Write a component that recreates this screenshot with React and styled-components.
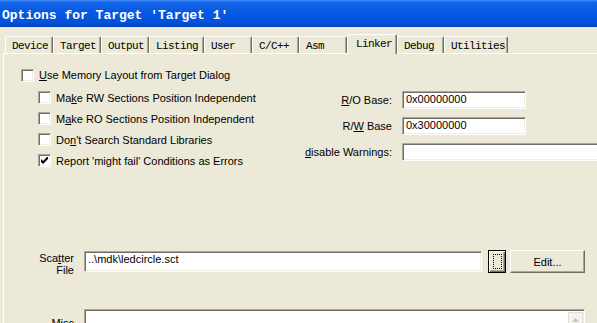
import styled, { createGlobalStyle } from 'styled-components';

const GlobalStyle = createGlobalStyle`
  html, body {
    margin: 0;
    padding: 0;
    background: #ece9d8;
  }
  body {
    font-family: "Liberation Sans", Arial, sans-serif;
    font-size: 11px;
    color: #000;
  }
`;

const Window = styled.div`
  width: 597px;
  height: 323px;
  overflow: hidden;
  background: #ece9d8;
  display: flex;
  flex-direction: column;
`;

const TitleBar = styled.div`
  flex: none;
  height: 27px;
  box-sizing: border-box;
  padding: 3px 0 0 2px;
  display: flex;
  align-items: center;
  background: linear-gradient(180deg, #3d87f5 0%, #1465e8 10%, #0658e2 45%, #0553dc 80%, #0444c2 100%);
  color: #fff;
  font: bold 13px "Liberation Mono", "DejaVu Sans Mono", monospace;
  white-space: pre;
`;

const TabStrip = styled.div`
  flex: none;
  height: 26px;
  display: flex;
  align-items: flex-end;
  padding-left: 5px;
  position: relative;
  z-index: 1;
`;

const Tab = styled.div`
  flex: none;
  box-sizing: border-box;
  width: ${({ $w }) => $w}px;
  height: ${({ $active }) => ($active ? 20 : 17)}px;
  margin-bottom: ${({ $active }) => ($active ? -1 : 0)}px;
  padding: ${({ $active }) => ($active ? '0 0 2px 8px' : '1px 0 0 6px')};
  display: flex;
  align-items: center;
  background: #ece9d8;
  border-top: 1px solid #fff;
  border-left: 1px solid #fff;
  border-right: 1px solid #716f64;
  border-top-left-radius: 2px;
  border-top-right-radius: 2px;
  box-shadow: inset -1px 0 #aca899;
  font: 11px "Liberation Mono", "DejaVu Sans Mono", monospace;
  letter-spacing: -0.6px;
  white-space: pre;
`;

const Panel = styled.div`
  flex: 1;
  min-width: 0;
  margin-left: 3px;
  border-top: 1px solid #fff;
  border-left: 1px solid #fff;
  display: flex;
  flex-direction: column;
`;

const TopSection = styled.div`
  display: flex;
`;

const OptionList = styled.div`
  flex: none;
  width: 296px;
  box-sizing: border-box;
  padding: 11px 0 0 17px;
  display: flex;
  flex-direction: column;
`;

const SubOptions = styled.div`
  margin-top: 2px;
  padding-left: 17px;
  display: flex;
  flex-direction: column;
`;

const OptionRow = styled.label`
  height: ${({ $h }) => $h || 20}px;
  display: flex;
  align-items: center;
  gap: 5px;
  white-space: nowrap;
`;

const CheckBox = styled.span`
  flex: none;
  position: relative;
  width: 13px;
  height: 13px;
  box-sizing: border-box;
  background: #fff;
  border: 1px solid;
  border-color: #aca899 #fff #fff #aca899;
  box-shadow: inset 1px 1px #716f64, inset -1px -1px #f1efe2;

  svg {
    position: absolute;
    left: 2px;
    top: 2px;
  }
`;

const FieldGrid = styled.div`
  flex: none;
  margin-top: 37px;
  display: grid;
  grid-template-columns: 92px auto;
  column-gap: 10px;
  row-gap: 8px;
  align-items: center;
  align-content: start;
`;

const FieldLabel = styled.span`
  justify-self: end;
  white-space: nowrap;
`;

const Field = styled.div`
  flex: none;
  box-sizing: border-box;
  width: ${({ $w }) => $w}px;
  height: ${({ $h }) => $h || 18}px;
  padding: 1px 3px 0;
  background: #fff;
  border: 1px solid;
  border-color: #aca899 #fff #fff #aca899;
  box-shadow: inset 1px 1px #716f64, inset -1px -1px #f1efe2;
  line-height: 13px;
  white-space: nowrap;
  position: relative;
`;

const FileRow = styled.div`
  margin-top: ${({ $top }) => $top}px;
  display: flex;
  align-items: flex-start;
`;

const RowLabel = styled.div`
  width: 70px;
  flex: none;
  padding-top: ${({ $pad }) => $pad}px;
  text-align: right;
  line-height: 12px;
`;

const Button = styled.div`
  flex: none;
  box-sizing: border-box;
  width: ${({ $w }) => $w}px;
  height: 23px;
  margin-left: ${({ $ml }) => $ml}px;
  display: flex;
  align-items: center;
  justify-content: center;
  background: #ece9d8;
  border: 1px solid;
  border-color: ${({ $focus }) => ($focus ? '#000' : '#fff #716f64 #716f64 #fff')};
  box-shadow: ${({ $focus }) =>
    $focus
      ? 'inset 1px 1px #fff, inset -1px -1px #716f64, inset -2px -2px #aca899'
      : 'inset -1px -1px #aca899'};
`;

const FocusRing = styled.span`
  width: 9px;
  height: 15px;
  box-sizing: border-box;
  border: 1px dotted #000;
`;

const ScrollUp = styled.div`
  position: absolute;
  right: 1px;
  top: 2px;
  width: 15px;
  height: 15px;
  box-sizing: border-box;
  background: #f4f3ee;
  border: 1px solid #e0dfd6;
  display: flex;
  align-items: center;
  justify-content: center;
`;

const tabs = [
  ['Device', 48],
  ['Target', 48],
  ['Output', 48],
  ['Listing', 55],
  ['User', 48],
  ['C/C++', 47],
  ['Asm', 48],
  ['Linker', 50],
  ['Debug', 47],
  ['Utilities', 64],
];

function Check({ checked }) {
  return (
    <CheckBox>
      {checked && (
        <svg width="7" height="7" viewBox="0 0 7 7">
          <polygon points="0,2 2,4 7,-1 7,2 2,7 0,5" fill="#000" />
        </svg>
      )}
    </CheckBox>
  );
}

export default function App() {
  return (
    <Window>
      <GlobalStyle />
      <TitleBar>Options for Target 'Target 1'</TitleBar>
      <TabStrip>
        {tabs.map(([name, w]) => (
          <Tab key={name} $w={w} $active={name === 'Linker'}>
            {name}
          </Tab>
        ))}
      </TabStrip>
      <Panel>
        <TopSection>
          <OptionList>
            <OptionRow>
              <Check />
              <span>
                <u>U</u>se Memory Layout from Target Dialog
              </span>
            </OptionRow>
            <SubOptions>
              <OptionRow $h={21}>
                <Check />
                <span>
                  Ma<u>k</u>e RW Sections Position Independent
                </span>
              </OptionRow>
              <OptionRow $h={21}>
                <Check />
                <span>
                  M<u>a</u>ke RO Sections Position Independent
                </span>
              </OptionRow>
              <OptionRow $h={21}>
                <Check />
                <span>
                  Do<u>n</u>'t Search Standard Libraries
                </span>
              </OptionRow>
              <OptionRow $h={21}>
                <Check checked />
                <span>Report 'might fail' Conditions as Errors</span>
              </OptionRow>
            </SubOptions>
          </OptionList>
          <FieldGrid>
            <FieldLabel>
              <u>R</u>/O Base:
            </FieldLabel>
            <Field $w={124}>0x00000000</Field>
            <FieldLabel>
              R/<u>W</u> Base
            </FieldLabel>
            <Field $w={124}>0x30000000</Field>
            <FieldLabel>
              <u>d</u>isable Warnings:
            </FieldLabel>
            <Field $w={220} />
          </FieldGrid>
        </TopSection>

        <FileRow $top={79}>
          <RowLabel $pad={2}>
            Sca<u>t</u>ter
            <br />
            File
          </RowLabel>
          <Field $w={398} $h={21} style={{ marginLeft: 10, marginTop: 1 }}>
            ..\mdk\ledcircle.sct
          </Field>
          <Button $w={18} $ml={6} $focus>
            <FocusRing />
          </Button>
          <Button $w={75} $ml={4}>
            Edit...
          </Button>
        </FileRow>

        <FileRow $top={33}>
          <RowLabel $pad={8}>Misc</RowLabel>
          <Field $w={501} $h={60} style={{ marginLeft: 10 }}>
            <ScrollUp>
              <svg width="7" height="4" viewBox="0 0 7 4">
                <polygon points="0,4 3.5,0 7,4" fill="#c8c6bb" />
              </svg>
            </ScrollUp>
          </Field>
        </FileRow>
      </Panel>
    </Window>
  );
}
